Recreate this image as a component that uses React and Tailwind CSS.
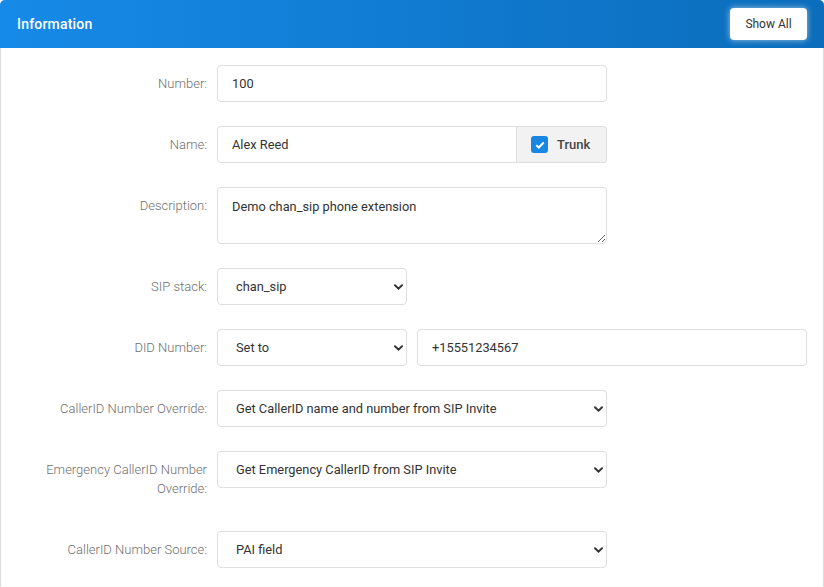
const labelCls =
  "w-[206px] shrink-0 text-right text-[13px] font-light text-[#6f6f6f] leading-[19px] py-[9px]";
const inputCls =
  "h-[37px] rounded-[4px] border border-[#dedede] bg-white px-[14px] text-[12.8px] text-[#333] outline-none";

function Chevron() {
  return (
    <svg
      className="pointer-events-none absolute right-[4px] top-1/2 -translate-y-1/2"
      width="9"
      height="6"
      viewBox="0 0 9 6"
    >
      <path d="M1 1.2 4.5 4.6 8 1.2" fill="none" stroke="#333" strokeWidth="1.9" strokeLinecap="round" />
    </svg>
  );
}

function Select({ value, width }) {
  return (
    <div className={`relative ${width}`}>
      <select
        defaultValue={value}
        className="h-[37px] w-full appearance-none rounded-[4px] border border-[#dedede] bg-white pl-[18px] pr-8 text-[12.8px] text-[#333] outline-none"
      >
        <option>{value}</option>
      </select>
      <Chevron />
    </div>
  );
}

function Row({ label, children, last }) {
  return (
    <div className={`flex items-start ${last ? "" : "mb-6"}`}>
      <label className={labelCls}>{label}</label>
      <div className="ml-[10px] flex gap-[10px]">{children}</div>
    </div>
  );
}

export default function App() {
  return (
    <div className="h-[587px] w-[824px] overflow-hidden bg-white font-['Roboto','Liberation_Sans',sans-serif]">
      <div className="h-full rounded-t-[5px] border-x border-[#dcdcdc]">
        {/* Header */}
        <div className="-mx-px flex h-12 items-center justify-between rounded-t-[5px] bg-gradient-to-r from-[#168ae8] to-[#0b6dbb] pl-[17px] pr-[17px]">
          <h2 className="text-[14px] font-medium tracking-[0.2px] text-white">Information</h2>
          <button className="h-[32px] w-[77px] rounded-[4px] bg-white text-[12px] text-[#333] shadow-[0_0_6px_rgba(255,255,255,0.6)]">
            Show All
          </button>
        </div>

        {/* Form */}
        <div className="pt-[17px]">
          <Row label="Number:">
            <input className={`${inputCls} w-[390px]`} defaultValue="100" />
          </Row>

          <Row label="Name:">
            <div className="flex w-[390px]">
              <input
                className={`${inputCls} w-[300px] rounded-r-none`}
                defaultValue="Alex Reed"
              />
              <div className="flex h-[37px] flex-1 items-center gap-[9px] rounded-r-[4px] border border-l-0 border-[#dedede] bg-[#f2f2f2] pl-[14px]">
                <span className="flex h-[17px] w-[17px] items-center justify-center rounded-[3px] bg-[#1787e3]">
                  <svg width="10" height="8" viewBox="0 0 10 8">
                    <path d="M1.3 4.2 3.8 6.5 8.7 1.5" fill="none" stroke="#fff" strokeWidth="2" />
                  </svg>
                </span>
                <span className="text-[13px] font-medium text-[#444]">Trunk</span>
              </div>
            </div>
          </Row>

          <Row label="Description:">
            <textarea
              className="h-[57px] w-[390px] rounded-[4px] border border-[#dedede] bg-white px-[14px] py-[9px] text-[12.8px] leading-[19px] text-[#333] outline-none"
              defaultValue="Demo chan_sip phone extension"
            />
          </Row>

          <Row label="SIP stack:">
            <Select value="chan_sip" width="w-[190px]" />
          </Row>

          <Row label="DID Number:">
            <Select value="Set to" width="w-[190px]" />
            <input className={`${inputCls} w-[390px]`} defaultValue="+15551234567" />
          </Row>

          <Row label="CallerID Number Override:">
            <Select value="Get CallerID name and number from SIP Invite" width="w-[390px]" />
          </Row>

          <Row label="Emergency CallerID Number Override:">
            <Select value="Get Emergency CallerID from SIP Invite" width="w-[390px]" />
          </Row>

          <Row label="CallerID Number Source:" last>
            <Select value="PAI field" width="w-[390px]" />
          </Row>
        </div>
      </div>
    </div>
  );
}
